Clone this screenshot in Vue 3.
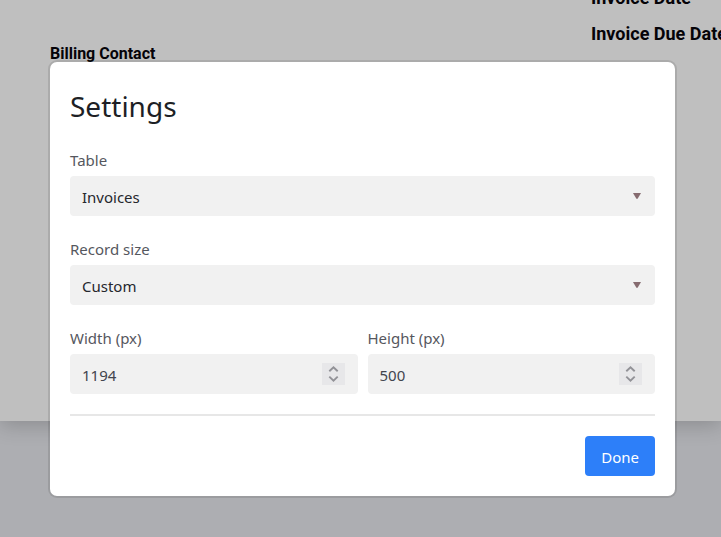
<script setup>
import { ref } from 'vue'

const table = ref('Invoices')
const recordSize = ref('Custom')
const width = ref(1194)
const height = ref(500)
</script>

<template>
  <div class="app">
    <main class="sheet">
      <section class="billing">Billing Contact</section>
      <section class="dates">
        <div>Invoice Date</div>
        <div>Invoice Due Date</div>
      </section>
    </main>
    <div class="overlay">
      <form class="dialog" role="dialog" aria-labelledby="settings-title" @submit.prevent>
        <h1 id="settings-title">Settings</h1>
        <div class="fields">
          <div class="field">
            <label for="table">Table</label>
            <div class="control">
              <select id="table" v-model="table">
                <option>Invoices</option>
              </select>
              <svg class="arrow" width="10" height="6" viewBox="0 0 10 6" aria-hidden="true">
                <path d="M1 0H9L5.6 5.8H4.4Z" fill="#866b70" />
              </svg>
            </div>
          </div>
          <div class="field">
            <label for="record-size">Record size</label>
            <div class="control">
              <select id="record-size" v-model="recordSize">
                <option>Custom</option>
              </select>
              <svg class="arrow" width="10" height="6" viewBox="0 0 10 6" aria-hidden="true">
                <path d="M1 0H9L5.6 5.8H4.4Z" fill="#866b70" />
              </svg>
            </div>
          </div>
          <div class="pair">
            <div class="field">
              <label for="width">Width (px)</label>
              <div class="control">
                <input id="width" v-model="width" type="number" />
                <svg class="spinner" width="23" height="22" viewBox="0 0 23 22" aria-hidden="true">
                  <rect width="23" height="22" fill="#e7e7e9" />
                  <path d="M7.3 8.3L11.5 4.3L15.7 8.3M7.3 13.6L11.5 17.6L15.7 13.6" fill="none" stroke="#929297" stroke-width="1.9" />
                </svg>
              </div>
            </div>
            <div class="field">
              <label for="height">Height (px)</label>
              <div class="control">
                <input id="height" v-model="height" type="number" />
                <svg class="spinner" width="23" height="22" viewBox="0 0 23 22" aria-hidden="true">
                  <rect width="23" height="22" fill="#e7e7e9" />
                  <path d="M7.3 8.3L11.5 4.3L15.7 8.3M7.3 13.6L11.5 17.6L15.7 13.6" fill="none" stroke="#929297" stroke-width="1.9" />
                </svg>
              </div>
            </div>
          </div>
        </div>
        <hr />
        <footer>
          <button type="submit">Done</button>
        </footer>
      </form>
    </div>
  </div>
</template>

<style>
body {
  background: #adaeb2;
}
</style>

<style scoped>
.app {
  min-height: 100vh;
  overflow: hidden;
  font-family: "Noto Sans", "Open Sans", sans-serif;
  font-size: 15px;
}

.sheet {
  display: flex;
  justify-content: space-between;
  box-sizing: border-box;
  min-height: 421px;
  padding-left: 50px;
  background: #bfbfbf;
  box-shadow: 0 4px 20px rgba(0, 0, 0, 0.2);
  color: #050308;
  font-family: Roboto, sans-serif;
  font-weight: 700;
  white-space: nowrap;
}

.billing {
  padding-top: 42px;
  font-size: 16px;
  line-height: 24px;
}

.dates {
  width: 130px;
  margin-top: -20px;
  font-size: 18px;
  line-height: 36px;
}

.overlay {
  position: absolute;
  inset: 0;
  padding: 60px 44px 0 48px;
}

.dialog {
  padding: 20px;
  background: #fff;
  background-clip: padding-box;
  border: 2px solid rgba(0, 0, 0, 0.1);
  border-radius: 9px;
}

h1 {
  margin: 0 0 18px;
  color: #1d1f25;
  font-size: 28px;
  font-weight: 400;
  line-height: 48px;
}

.fields {
  display: flex;
  flex-direction: column;
  gap: 21px;
}

.pair {
  display: flex;
  gap: 10px;
}

.pair .field {
  flex: 1;
}

label {
  display: block;
  margin-bottom: 4px;
  color: #55575e;
  line-height: 24px;
}

.control {
  display: flex;
  align-items: center;
  position: relative;
}

select,
input {
  appearance: none;
  box-sizing: border-box;
  width: 100%;
  min-width: 0;
  height: 40px;
  margin: 0;
  padding: 2px 12px 0;
  background: #f1f1f1;
  border: 0;
  border-radius: 4px;
  color: #25272d;
  font: inherit;
}

input {
  appearance: textfield;
  color: #42454e;
}

.arrow,
.spinner {
  position: absolute;
  right: 13px;
  pointer-events: none;
}

hr {
  height: 2px;
  margin: 20px 0;
  background: #e7e7e7;
  border: 0;
}

footer {
  display: flex;
  justify-content: flex-end;
}

button {
  height: 40px;
  padding: 2px 16px 0;
  background: #2d7ff9;
  border: 0;
  border-radius: 4px;
  color: #fff;
  font: inherit;
}
</style>
